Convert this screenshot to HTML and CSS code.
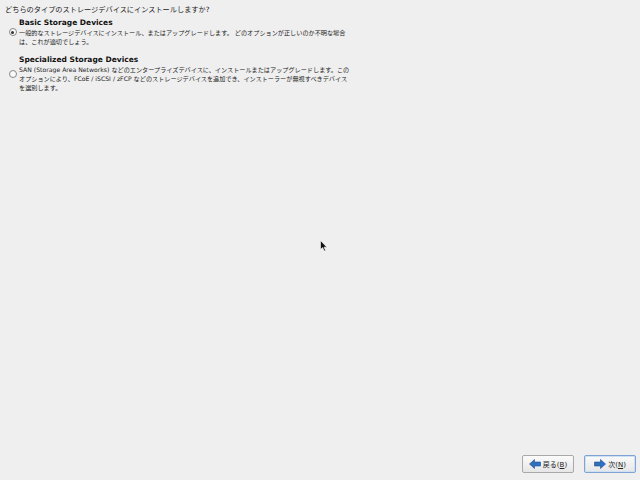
FILE: index.html
```html
<!DOCTYPE html>
<html>
<head>
<meta charset="utf-8">
<link rel="stylesheet" href="styles.css">
</head>
<body>
<div class="page">
  <div class="question">どちらのタイプのストレージデバイスにインストールしますか?</div>
  <div class="option first">
    <div class="radio-col"><span class="radio checked"></span></div>
    <div class="opt-body">
      <div class="opt-title">Basic Storage Devices</div>
      <div class="opt-desc">一般的なストレージデバイスにインストール、またはアップグレードします。 どのオプションが正しいのか不明な場合<br>は、これが適切でしょう。</div>
    </div>
  </div>
  <div class="option second">
    <div class="radio-col"><span class="radio"></span></div>
    <div class="opt-body">
      <div class="opt-title">Specialized Storage Devices</div>
      <div class="opt-desc">SAN (Storage Area Networks) などのエンタープライズデバイスに、インストールまたはアップグレードします。この<br>オプションにより、FCoE / iSCSI / zFCP などのストレージデバイスを追加でき、インストーラーが無視すべきデバイス<br>を選別します。</div>
    </div>
  </div>
  <div class="spacer"></div>
  <div class="buttons">
    <button class="btn"><svg class="ico" width="12" height="10" viewBox="0 0 12 10"><path d="M0.5 5 L5.5 0.5 L5.5 3 L11.5 3 L11.5 7 L5.5 7 L5.5 9.5 Z" fill="#2f6fc0" stroke="#1d4f94" stroke-width="0.6"/></svg><span>戻る(<u>B</u>)</span></button>
    <button class="btn focus"><svg class="ico" width="12" height="10" viewBox="0 0 12 10"><path d="M11.5 5 L6.5 0.5 L6.5 3 L0.5 3 L0.5 7 L6.5 7 L6.5 9.5 Z" fill="#2f6fc0" stroke="#1d4f94" stroke-width="0.6"/></svg><span>次(<u>N</u>)</span></button>
  </div>
</div>
<svg class="cursor" width="8" height="12" viewBox="0 0 8 12"><path d="M0.5 0.5 L0.5 9.5 L2.6 7.6 L4.2 11 L5.6 10.4 L4 7.2 L6.8 7.2 Z" fill="#111" stroke="#fff" stroke-width="0.6"/></svg>
</body>
</html>
```
FILE: styles.css
```css
html, body {
  margin: 0;
  padding: 0;
  background: #efefef;
}
body {
  width: 640px;
  height: 480px;
  overflow: hidden;
  font-family: "DejaVu Sans", "Noto Sans CJK JP", sans-serif;
  color: #222;
}
.page {
  display: flex;
  flex-direction: column;
  height: 480px;
  box-sizing: border-box;
  padding: 5px 4px 7px 4px;
}
.question {
  font-size: 7.2px;
  line-height: 10px;
  margin-left: 1px;
}
.option {
  display: flex;
  align-items: center;
  gap: 2px;
  margin-left: 4px;
}
.option.first { margin-top: 3px; }
.option.second { margin-top: 9px; }
.radio-col {
  width: 9px;
  display: flex;
  justify-content: center;
}
.radio {
  width: 6px;
  height: 6px;
  border: 1px solid #888;
  border-radius: 50%;
  background: #fafafa;
  position: relative;
  box-sizing: content-box;
}
.radio.checked::after {
  content: "";
  position: absolute;
  left: 1.5px;
  top: 1.5px;
  width: 3px;
  height: 3px;
  border-radius: 50%;
  background: #333;
}
.opt-title {
  font-weight: bold;
  font-size: 7.5px;
  line-height: 10px;
  color: #111;
}
.opt-desc {
  font-size: 6.15px;
  line-height: 9px;
  color: #222;
}
.spacer { flex: 1; }
.buttons {
  display: flex;
  justify-content: flex-end;
  gap: 10px;
}
.btn {
  width: 52px;
  height: 18px;
  display: flex;
  align-items: center;
  justify-content: center;
  gap: 2px;
  padding: 0;
  border: 1px solid #a9a9a9;
  border-radius: 2px;
  background: linear-gradient(#fbfbfb, #e6e6e6);
  font-family: "DejaVu Sans", "Noto Sans CJK JP", sans-serif;
  font-size: 7px;
  color: #222;
}
.btn.focus {
  border-color: #7fa3d3;
  box-shadow: inset 0 0 0 1px #cfe0f5;
}
.ico { display: block; }
.cursor {
  position: absolute;
  left: 320px;
  top: 240px;
}
```
